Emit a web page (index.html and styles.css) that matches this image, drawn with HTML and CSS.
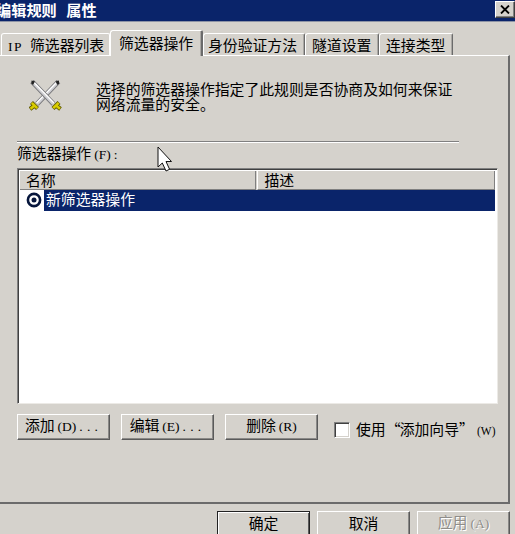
FILE: index.html
```
<!DOCTYPE html>
<html lang="zh-CN">

<head>
  <meta charset="UTF-8">
  <meta name="viewport" content="width=device-width, initial-scale=1.0">
  <title>编辑规则 属性</title>
  <link rel="stylesheet" href="styles.css">
</head>

<body>
  <div class="dialog">
    <div class="titlebar">
      <span class="title">编辑规则 属性</span>
      <button class="close" aria-label="关闭">
        <svg width="10" height="9" viewBox="0 0 10 9"><path d="M1 .5l8 8M9 .5l-8 8" stroke="#000" stroke-width="1.8" /></svg>
      </button>
    </div>

    <div class="tabs">
      <div class="tab first"><span class="en ip">IP</span>筛选器列表</div>
      <div class="tab active">筛选器操作</div>
      <div class="tab auth">身份验证方法</div>
      <div class="tab">隧道设置</div>
      <div class="tab">连接类型</div>
    </div>

    <div class="panel">
      <div class="intro">
        <svg class="swords" width="33" height="31" viewBox="0 0 33 31">
          <g id="sword">
            <path d="M29.500 1.500L8 24" stroke="#77777a" stroke-width="4.800" />
            <path d="M28.500 2.500L8 24" stroke="#d0d0d4" stroke-width="3.200" />
            <path d="M27.500 2.500L7.500 23" stroke="#fff" stroke-width="1.200" />
            <path d="M26.500 1.500l3.500-1v3l-1.500 1.500z" fill="#222" />
            <path d="M2.500 22.500l6 6M5.500 25.500l-4.500 3.500" stroke="#5f5900" stroke-width="4.200" />
            <path d="M2.800 22.800l5.400 5.400M5.500 25.500l-4 3.200" stroke="#d8cc00" stroke-width="2.600" />
          </g>
          <use href="#sword" transform="translate(32.500 0) scale(-1 1)" />
        </svg>
        <p>选择的筛选器操作指定了此规则是否协商及如何来保证<br>网络流量的安全。</p>
      </div>
      <div class="line"></div>
      <div class="label">筛选器操作<span class="en">(F)<i>:</i></span></div>

      <div class="list">
        <div class="list-head">
          <div class="th name">名称</div>
          <div class="th desc">描述</div>
        </div>
        <div class="row">
          <svg width="16" height="16" viewBox="0 0 16 16">
            <circle cx="8" cy="8" r="6.1" fill="#fff" stroke="#06163c" stroke-width="2.6" />
            <circle cx="8" cy="8" r="2.5" fill="#06163c" />
          </svg>
          <div class="selected">新筛选器操作</div>
        </div>
      </div>

      <div class="actions">
        <button class="btn">添加<span class="en">(D)<i>...</i></span></button>
        <button class="btn">编辑<span class="en">(E)<i>...</i></span></button>
        <button class="btn">删除<span class="en">(R)</span></button>
        <div class="check">
          <span class="box"></span>
          <span class="check-text">使用<span class="quote">“</span>添加向导<span class="quote close-quote">”</span><span class="en wizard">(W)</span></span>
        </div>
      </div>
    </div>

    <div class="footer">
      <button class="btn default">确定</button>
      <button class="btn">取消</button>
      <button class="btn disabled">应用<span class="en">(A)</span></button>
    </div>

    <!-- 鼠标指针 -->
    <svg class="cursor" width="16" height="27" viewBox="0 0 16 27">
      <path d="M1 1v20l4.300-4 3.700 8 3.600-1.700-3.600-7.800h5.500z" fill="#fff" stroke="#111" stroke-width="1" />
    </svg>
  </div>
</body>

</html>
```
FILE: styles.css
```
* {
  margin: 0;
  padding: 0;
  box-sizing: border-box;
}

body {
  overflow: hidden;
  background: #d5d2cc;
}

body,
button {
  font: 14.85px/15px "Noto Sans CJK SC", sans-serif;
  color: #000;
}

svg {
  display: block;
  flex: none;
  fill: none;
}

/* 半角字符 */
.en {
  margin-left: 3px;
  font-family: "Liberation Serif", serif;
  font-size: 13.5px;
  line-height: 1;
}

.en i {
  margin-left: 3px;
  font-style: normal;
  letter-spacing: 4.2px;
}

.en.ip {
  display: inline-block;
  width: 22px;
  margin-left: 0;
  letter-spacing: 1.5px;
}

.en.wizard {
  display: inline-block;
  margin-left: 0;
  transform: scaleX(.85);
  transform-origin: left;
}

.dialog {
  position: relative;
  width: 515px;
  height: 534px;
  overflow: hidden;
}

/* 标题栏 */
.titlebar {
  display: flex;
  justify-content: space-between;
  height: 22px;
  padding: 1px 0 0;
  background: #0a246a;
  border-bottom: 1px solid #8d93a5;
}

.title {
  margin-left: -4px;
  padding-top: 1px;
  font-size: 15.2px;
  font-weight: 700;
  word-spacing: 6px;
  color: #fff;
  white-space: nowrap;
}

.close {
  display: flex;
  align-items: center;
  justify-content: center;
  width: 20px;
  height: 17px;
  background: #d5d2cc;
  border: 1px solid;
  border-color: #fff #404040 #404040 #fff;
  box-shadow: inset -1px -1px #808080;
}

/* 选项卡 */
.tabs {
  display: flex;
  align-items: flex-end;
  height: 33px;
  padding-left: 1px;
}

.tab {
  width: 74px;
  height: 22px;
  padding: 3px 0 0 6px;
  border: 1px solid;
  border-color: #fff #6b6b6b transparent #fff;
  border-bottom: 0;
  border-radius: 3px 2px 0 0;
  box-shadow: inset -1px 0 #aaa8a4;
  white-space: nowrap;
}

.tab.first {
  width: 109px;
  border-right-color: #fff;
  box-shadow: none;
}

.tab.active {
  z-index: 1;
  width: 93px;
  height: 26px;
  margin-bottom: -1px;
  padding: 4px 0 0 8px;
  background: #d5d2cc;
  border-right: 2px solid #6b6b6b;
}

.tab.auth {
  width: 102px;
  padding-left: 4px;
}

/* 选项卡内容 */
.panel {
  width: 510px;
  height: 449px;
  padding-left: 17px;
  border-top: 1px solid #fff;
  border-right: 2px solid #6b6b6b;
  border-bottom: 2px solid #6b6b6b;
}

.intro {
  display: flex;
  height: 85px;
  padding: 25px 0 0 12px;
}

.intro p {
  margin: 1px 0 0 34px;
  line-height: 14.5px;
  white-space: nowrap;
}

.swords {
  margin-top: -1px;
}

.line {
  width: 442px;
  height: 2px;
  border-top: 1px solid #808080;
  border-bottom: 1px solid #fff;
}

.label {
  height: 25px;
  padding-top: 2px;
}

.list {
  width: 481px;
  height: 236px;
  background: #fff;
  border: 1px solid;
  border-color: #808080 #eceae6 #eceae6 #808080;
  box-shadow: inset 1px 1px #404040;
  padding: 2px 2px 0 2px;
}

.list-head {
  display: flex;
  height: 19px;
  background: #d5d2cc;
}

.th {
  padding: 1px 0 0 6px;
  border-right: 1px solid #808080;
  border-bottom: 1px solid #808080;
}

.name {
  width: 236px;
}

.desc {
  width: 239px;
  margin-left: 1px;
  padding-left: 7px;
  border-left: 1px solid #fff;
}

.row {
  display: flex;
  height: 21px;
}

.row svg {
  margin: 2px 2px 0 6px;
}

.selected {
  flex: 1;
  padding: 1px 0 0 2px;
  background: #0a246a;
  color: #fff;
}

/* 按钮 */
.btn {
  width: 93px;
  height: 26px;
  padding-bottom: 3px;
  background: #d5d2cc;
  border: 1px solid;
  border-color: #fff #5a5a5a #5a5a5a #fff;
  box-shadow: inset -1px -1px #8a8987;
  white-space: nowrap;
}

.actions {
  display: flex;
  gap: 11px;
  margin-top: 10px;
}

.check {
  display: flex;
  margin-left: 5px;
  padding-top: 8px;
  white-space: nowrap;
}

.check-text {
  margin-top: -1px;
}

.box {
  width: 16px;
  height: 16px;
  margin-right: 6px;
  background: #fff;
  border: 1px solid;
  border-color: #808080 #fff #fff #808080;
  box-shadow: inset 1px 1px #404040, inset -1px -1px #d5d2cc;
}

.quote {
  display: inline-block;
  width: 14px;
  text-align: right;
}

.close-quote {
  width: 18px;
  text-align: left;
}

.footer {
  display: flex;
  gap: 7px;
  padding: 7px 0 0 217px;
}

.footer .default {
  border-color: #222;
  box-shadow: inset 1px 1px #fff, inset -1px -1px #5a5a5a;
}

.disabled {
  color: #8f8d89;
  text-shadow: 1px 1px #fff;
}

.cursor {
  position: absolute;
  left: 157px;
  top: 146px;
}
```
